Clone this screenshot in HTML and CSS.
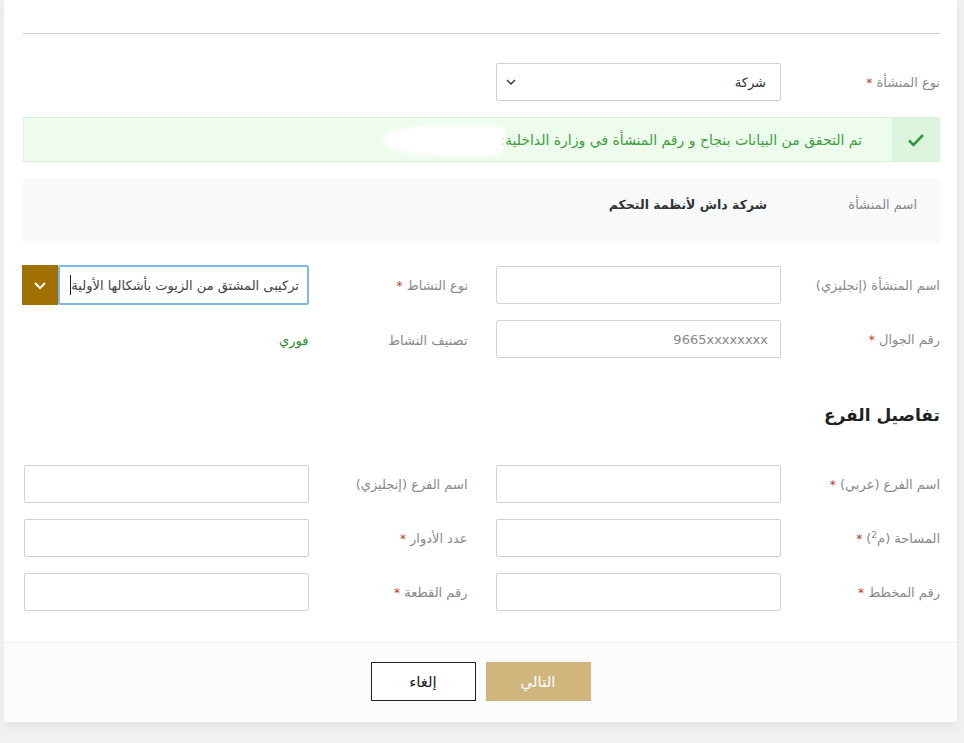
FILE: index.html
```html
<!DOCTYPE html>
<html lang="ar" dir="rtl">
    <head>
        <meta charset="UTF-8">
        <title>تسجيل المنشأة</title>
        <link rel="stylesheet" href="styles.css">
    </head>
    <body>
        <div id="card">
            <div id="content">
                <hr class="divider">

                <!-- Facility type -->
                <div class="row">
                    <div class="field">
                        <label>نوع المنشأة <span class="req">*</span></label>
                        <div class="select">
                            <span>شركة</span>
                            <svg width="10" height="6" viewBox="0 0 10 6"><path d="M1 1l4 4 4-4" fill="none" stroke="#333" stroke-width="1.4"/></svg>
                        </div>
                    </div>
                </div>

                <!-- Verified message -->
                <div class="alert">
                    <div class="alert-icon">
                        <svg width="18" height="14" viewBox="0 0 18 14"><path d="M2 7.5l4.5 4.5L16 2" fill="none" stroke="#2f9a3f" stroke-width="2.6"/></svg>
                    </div>
                    <div class="alert-text">تم التحقق من البيانات بنجاح و رقم المنشأة في وزارة الداخلية: 8</div>
                    <span class="blot"></span>
                </div>

                <div class="info">
                    <span class="info-label">اسم المنشأة</span>
                    <span class="info-value">شركة داش لأنظمة التحكم</span>
                </div>

                <div class="row first">
                    <div class="field">
                        <label>اسم المنشأة (إنجليزي)</label>
                        <input type="text">
                    </div>
                    <div class="field">
                        <label>نوع النشاط <span class="req">*</span></label>
                        <div class="combo">
                            <div class="combo-text">تركيبى المشتق من الزيوت بأشكالها الأولية</div>
                            <div class="combo-btn">
                                <svg width="14" height="9" viewBox="0 0 14 9"><path d="M2 2l5 5 5-5" fill="none" stroke="#fff" stroke-width="2"/></svg>
                            </div>
                        </div>
                    </div>
                </div>

                <div class="row">
                    <div class="field">
                        <label>رقم الجوال <span class="req">*</span></label>
                        <input type="text" placeholder="9665xxxxxxxx">
                    </div>
                    <div class="field top">
                        <label>تصنيف النشاط</label>
                        <span class="green">فوري</span>
                    </div>
                </div>

                <h2 class="section">تفاصيل الفرع</h2>

                <div class="row">
                    <div class="field">
                        <label>اسم الفرع (عربي) <span class="req">*</span></label>
                        <input type="text">
                    </div>
                    <div class="field">
                        <label>اسم الفرع (إنجليزي)</label>
                        <input type="text">
                    </div>
                </div>
                <div class="row">
                    <div class="field">
                        <label>المساحة (م<sup>2</sup>) <span class="req">*</span></label>
                        <input type="text">
                    </div>
                    <div class="field">
                        <label>عدد الأدوار <span class="req">*</span></label>
                        <input type="text">
                    </div>
                </div>
                <div class="row">
                    <div class="field">
                        <label>رقم المخطط <span class="req">*</span></label>
                        <input type="text">
                    </div>
                    <div class="field">
                        <label>رقم القطعة <span class="req">*</span></label>
                        <input type="text">
                    </div>
                </div>
            </div>

            <div id="footer">
                <button class="btn-next">التالي</button>
                <button class="btn-cancel">إلغاء</button>
            </div>
        </div>
    </body>
</html>
```

FILE: styles.css
```css
* {
    margin: 0;
    padding: 0;
    box-sizing: border-box;
}

body {
    font: 14px 'DejaVu Sans', sans-serif;
    background-color: #f1f1f1;
    height: 743px;
    overflow: hidden;
}

#card {
    margin: 0 7px 0 4px;
    background-color: white;
    box-shadow: 0 4px 10px rgba(0, 0, 0, 0.06);
}

#content {
    padding: 33px 17px 15px 19px;
}

.divider {
    border: none;
    border-top: 1px solid #cdcdcd;
    margin-bottom: 29px;
}

.row {
    display: grid;
    grid-template-columns: 1fr 1fr;
    column-gap: 28px;
    margin-bottom: 16px;
}

.row.first {
    margin-top: 23px;
}

.field {
    display: flex;
    align-items: center;
    height: 38px;
}

.field.top {
    align-items: flex-start;
    padding-top: 13px;
}

.field label {
    width: 159px;
    flex-shrink: 0;
    color: #8a8a8a;
    font-size: 13px;
}

.field .req {
    color: #c0392b;
    font-size: 12px;
}

.field sup {
    font-size: 9px;
}

.field input {
    width: 285px;
    height: 38px;
    border: 1px solid #d2d2d2;
    border-radius: 2px;
    padding: 0 12px;
    font: 13px 'DejaVu Sans', sans-serif;
    color: #333;
}

.field input::placeholder {
    color: #888;
}

.select {
    width: 285px;
    height: 38px;
    border: 1px solid #d2d2d2;
    border-radius: 2px;
    padding: 0 14px 0 9px;
    display: flex;
    align-items: center;
    justify-content: space-between;
    color: #333;
    font-size: 13px;
}

.alert {
    position: relative;
    display: flex;
    align-items: center;
    height: 45px;
    background-color: #eefcee;
    border: 1px solid #d9f1d9;
}

.alert-icon {
    width: 47px;
    height: 100%;
    background-color: #ddf5dd;
    display: flex;
    align-items: center;
    justify-content: center;
}

.alert-text {
    padding-right: 30px;
    color: #3d9f3d;
    font-size: 14px;
    letter-spacing: 0.1px;
    white-space: nowrap;
}

.blot {
    position: absolute;
    left: 360px;
    top: 8px;
    width: 120px;
    height: 30px;
    background-color: white;
    border-radius: 40% 10% 20% 50%;
    filter: blur(2px);
}

.info {
    display: flex;
    align-items: center;
    height: 65px;
    margin-top: 16px;
    padding-bottom: 12px;
    background-color: #f7f9fa;
}

.info-label {
    width: 173px;
    padding-right: 23px;
    color: #8a8a8a;
    font-size: 13px;
}

.info-value {
    color: #333;
    font-size: 12.5px;
    font-weight: bold;
}

.combo {
    display: flex;
    width: 287px;
    height: 40px;
}

.combo-text {
    flex: 1;
    height: 40px;
    border: 2px solid #7fb6ea;
    border-radius: 2px;
    padding: 0 8px;
    display: flex;
    align-items: center;
    overflow: hidden;
    white-space: nowrap;
    color: #444;
    font-size: 13px;
}

/* text cursor at the end of the value */
.combo-text::after {
    content: '';
    flex-shrink: 0;
    width: 1px;
    height: 20px;
    background-color: #222;
}

.combo-btn {
    width: 36px;
    height: 40px;
    background-color: #a07000;
    display: flex;
    align-items: center;
    justify-content: center;
}

.green {
    color: #2e8b2e;
    font-size: 13px;
}

.section {
    font-size: 17px;
    color: #222;
    margin: 47px 0 40px;
}

#footer {
    display: flex;
    justify-content: center;
    gap: 10px;
    padding: 19px 0 21px;
    border-top: 1px solid #ececec;
    background-color: #fcfcfc;
}

#footer button {
    width: 105px;
    height: 39px;
    font: 15px 'DejaVu Sans', sans-serif;
    cursor: pointer;
}

.btn-next {
    border: none;
    color: white;
    background-color: #d0b57d;
}

.btn-cancel {
    border: 1px solid #222;
    color: #222;
    background-color: white;
}
```
